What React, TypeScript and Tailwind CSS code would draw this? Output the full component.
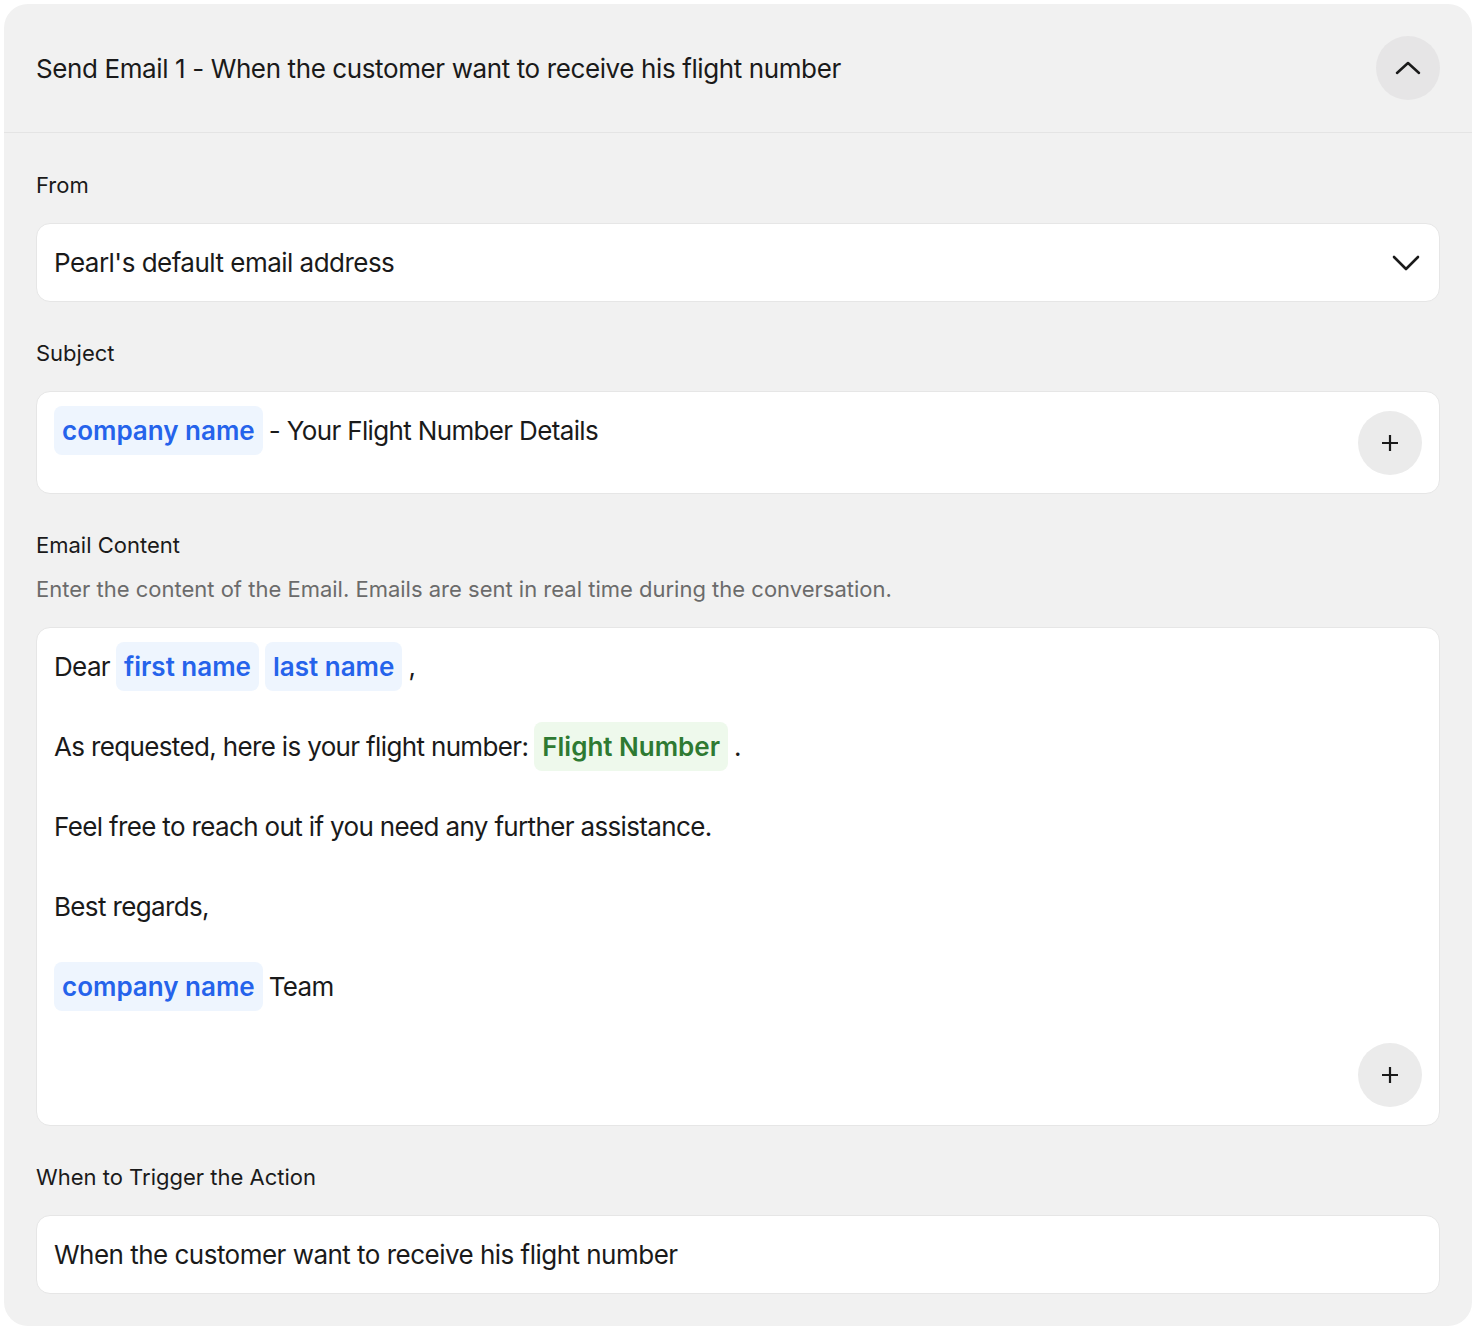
import React from "react";

const font = { fontFamily: "Inter, 'Noto Sans', sans-serif" };

function Chip({ children, green }: { children: React.ReactNode; green?: boolean }) {
  return (
    <span
      className={
        "inline-flex h-[49px] items-center rounded-[8px] px-[8px] font-semibold tracking-[0em] " +
        (green ? "bg-[#eef9ec] text-[#2e7a32]" : "bg-[#eef5fe] text-[#2563eb]")
      }
    >
      {children}
    </span>
  );
}

function PlusButton() {
  return (
    <div className="flex h-16 w-16 items-center justify-center rounded-full bg-[#ebebeb]">
      <svg width="20" height="20" viewBox="0 0 20 20" fill="none" stroke="#1a1a1a" strokeWidth="2.2" strokeLinecap="butt">
        <path d="M10 2v16M2 10h16" />
      </svg>
    </div>
  );
}

function Label({ children }: { children: React.ReactNode }) {
  return <div className="text-[22px] leading-[28px] tracking-[0em] text-[#1a1a1a]">{children}</div>;
}

export default function App() {
  return (
    <div className="min-h-[1330px] bg-white p-[4px]" style={font}>
      <div className="w-[1468px] rounded-[24px] bg-[#f1f1f1] text-[#1a1a1a]">
        <div className="flex h-[129px] items-center justify-between border-b border-[#e4e4e4] pl-[32px] pr-[32px]">
          <div className="text-[26px] tracking-[-0.015em]">Send Email 1 - When the customer want to receive his flight number</div>
          <div className="flex h-16 w-16 items-center justify-center rounded-full bg-[#e6e5e6]">
            <svg width="26" height="14" viewBox="0 0 26 14" fill="none" stroke="#1a1a1a" strokeWidth="2.5" strokeLinecap="round" strokeLinejoin="round">
              <path d="M2 12L13 2l11 10" />
            </svg>
          </div>
        </div>

        <div className="px-[32px] pb-[32px] pt-[38px]">
          <Label>From</Label>
          <div className="mt-[24px] flex h-[79px] items-center justify-between rounded-[14px] border border-[#e6e6e6] bg-white pl-[17px] pr-[19px]">
            <span className="text-[26px] tracking-[-0.02em]">Pearl's default email address</span>
            <svg width="28" height="16" viewBox="0 0 28 16" fill="none" stroke="#1a1a1a" strokeWidth="2.6" strokeLinecap="round" strokeLinejoin="round">
              <path d="M2 2l12 12L26 2" />
            </svg>
          </div>

          <div className="mt-[37px]">
            <Label>Subject</Label>
          </div>
          <div className="mt-[24px] flex h-[103px] justify-between rounded-[14px] border border-[#e6e6e6] bg-white pl-[17px] pr-[17px]">
            <div className="flex h-fit items-center gap-[6px] pt-[14px] text-[26px] tracking-[-0.025em]">
              <Chip>company name</Chip>
              <span>- Your Flight Number Details</span>
            </div>
            <div className="flex items-center">
              <PlusButton />
            </div>
          </div>

          <div className="mt-[37px]">
            <Label>Email Content</Label>
          </div>
          <div className="mt-[16px] text-[22px] leading-[28px] tracking-[0em] text-[#6b6b6b]">
            Enter the content of the Email. Emails are sent in real time during the conversation.
          </div>
          <div className="mt-[24px] flex h-[499px] flex-col justify-between rounded-[14px] border border-[#e6e6e6] bg-white pb-[18px] pl-[17px] pr-[17px] pt-[14px]">
            <div className="flex flex-col gap-[31px] text-[26px] tracking-[-0.025em]">
              <div className="flex items-center gap-[6px]">
                <span>Dear</span>
                <Chip>first name</Chip>
                <Chip>last name</Chip>
                <span>,</span>
              </div>
              <div className="flex items-center gap-[6px]">
                <span>As requested, here is your flight number:</span>
                <Chip green>Flight Number</Chip>
                <span>.</span>
              </div>
              <div className="flex h-[49px] items-center">Feel free to reach out if you need any further assistance.</div>
              <div className="flex h-[49px] items-center">Best regards,</div>
              <div className="flex items-center gap-[6px]">
                <Chip>company name</Chip>
                <span>Team</span>
              </div>
            </div>
            <div className="flex justify-end">
              <PlusButton />
            </div>
          </div>

          <div className="mt-[37px]">
            <Label>When to Trigger the Action</Label>
          </div>
          <div className="mt-[24px] flex h-[79px] items-center rounded-[14px] border border-[#e6e6e6] bg-white pl-[17px]">
            <span className="text-[26px] tracking-[-0.02em]">When the customer want to receive his flight number</span>
          </div>
        </div>
      </div>
    </div>
  );
}
